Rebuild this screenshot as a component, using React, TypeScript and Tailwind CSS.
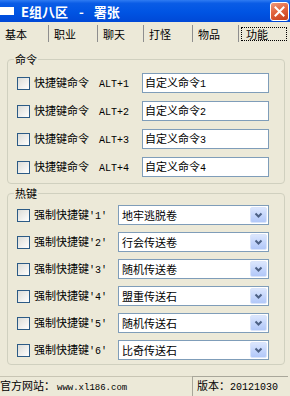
import React from "react";

const CJK = "font-['Noto_Sans_CJK_SC',sans-serif]";
const MONO = "font-['Liberation_Mono',monospace]";

function Checkbox() {
  return (
    <div className="w-[13px] h-[13px] shrink-0 border border-[#2c5b86] bg-gradient-to-br from-[#dcdcd7] to-white" />
  );
}

function Chevron() {
  return (
    <svg width="9" height="7" viewBox="0 0 9 7">
      <path d="M1.5 1.5 L4.5 4.5 L7.5 1.5" fill="none" stroke="#4d6185" strokeWidth="2" />
    </svg>
  );
}

function GroupBox({ label, className, children }: { label: string; className: string; children: React.ReactNode }) {
  return (
    <div className={`relative mx-[7px] w-[278px] border border-[#d0d0bf] rounded-[4px] ${className}`}>
      <span className={`absolute -top-[8px] left-[6px] bg-[#ece9d8] px-[1px] text-[11px] leading-[14px] text-black ${CJK}`}>
        {label}
      </span>
      {children}
    </div>
  );
}

export default function App() {
  const tabs = [
    { t: "基本", w: "w-[48px]" },
    { t: "职业", w: "w-[49px]" },
    { t: "聊天", w: "w-[46px]" },
    { t: "打怪", w: "w-[49px]" },
    { t: "物品", w: "w-[46px]" },
  ];
  const cmds = ["1", "2", "3", "4"];
  const hot = [
    { n: "1", v: "地牢逃脱卷" },
    { n: "2", v: "行会传送卷" },
    { n: "3", v: "随机传送卷" },
    { n: "4", v: "盟重传送石" },
    { n: "5", v: "随机传送石" },
    { n: "6", v: "比奇传送石" },
  ];
  return (
    <div className={`w-[290px] h-[396px] overflow-hidden bg-[#ece9d8] flex flex-col text-black ${CJK}`}>
      {/* title bar */}
      <div className="h-[22px] shrink-0 flex items-center bg-[linear-gradient(180deg,#2f7bf2_0%,#0a5ce6_15%,#0054e3_55%,#0048d6_100%)]">
        <div className="w-[14px] h-[8px] bg-white shrink-0" />
        <div className={`ml-[7px] flex items-baseline text-[13px] font-bold text-white leading-none ${CJK}`}>
          <span>E组八区</span>
          <span className="ml-[11px]">-</span>
          <span className="ml-[10px]">署张</span>
        </div>
        <div className="ml-auto mr-[1px] w-[19px] h-[19px] rounded-[3px] border border-white bg-[linear-gradient(160deg,#f09a7c_0%,#e2643f_45%,#c63e1a_100%)] flex items-center justify-center">
          <svg width="11" height="11" viewBox="0 0 11 11">
            <path d="M1.5 1.5 L9.5 9.5 M9.5 1.5 L1.5 9.5" stroke="white" strokeWidth="2" strokeLinecap="square" />
          </svg>
        </div>
      </div>

      {/* tabs */}
      <div className="h-[20px] shrink-0 flex items-stretch pt-[3px]">
        {tabs.map((tb, i) => (
          <div
            key={tb.t}
            className={`${tb.w} flex items-center pl-[5px] pt-[2px] text-[11px] leading-none ${i > 0 ? "border-l border-[#8e8e8e]" : ""}`}
          >
            {tb.t}
          </div>
        ))}
        <div className="flex-1 border-l border-[#8e8e8e] flex items-center pl-[2px] pr-[2px]">
          <div className="w-[46px] h-[14px] border border-dotted border-black flex items-center pl-[4px] pt-[1px] text-[11px] leading-none">
            功能
          </div>
        </div>
      </div>

      {/* command group */}
      <GroupBox label="命令" className="mt-[17px] pt-[13px] pb-[6px] flex flex-col gap-[8px]">
        {cmds.map((n) => (
          <div key={n} className="h-[20px] flex items-center pl-[9px]">
            <Checkbox />
            <div className="ml-[4px] w-[108px] flex items-baseline text-[11px] leading-[14px]">
              <span>快捷键命令</span>
              <span className={`ml-[10px] text-[10px] ${MONO}`}>ALT+{n}</span>
            </div>
            <div className="w-[127px] h-[20px] border border-[#7f9db9] bg-white flex items-center pl-[2px]">
              <div className="flex items-baseline text-[11px] leading-[14px]">
                <span>自定义命令</span>
                <span className={`text-[10px] ${MONO}`}>{n}</span>
              </div>
            </div>
          </div>
        ))}
      </GroupBox>

      {/* hotkey group */}
      <GroupBox label="热键" className="mt-[9px] pt-[11px] pb-[4px] flex flex-col gap-[7px]">
        {hot.map((h) => (
          <div key={h.n} className="h-[20px] flex items-center pl-[9px]">
            <Checkbox />
            <div className="ml-[4px] w-[84px] flex items-baseline text-[11px] leading-[14px]">
              <span>强制快捷键</span>
              <span className={`text-[10px] ${MONO}`}>'{h.n}'</span>
            </div>
            <div className="w-[151px] h-[20px] border border-[#7f9db9] bg-white flex items-center pl-[3px] pr-[1px] text-[11px] leading-none">
              <span>{h.v}</span>
              <div className="ml-auto w-[17px] h-[16px] rounded-[2px] border border-[#d9e4fb] bg-[linear-gradient(180deg,#dbe6fd_0%,#c1d3fb_60%,#b2c8f8_100%)] flex items-center justify-center">
                <Chevron />
              </div>
            </div>
          </div>
        ))}
      </GroupBox>

      {/* status bar */}
      <div className="mt-auto h-[20px] shrink-0 flex items-stretch">
        <div className="w-[192px] border-t border-[#c8c5b4] flex items-center">
          <div className="flex items-baseline text-[11px] leading-[14px]">
            <span>官方网站：</span>
            <span className={`ml-[2px] text-[9px] ${MONO}`}>www.xl186.com</span>
          </div>
        </div>
        <div className="w-[96px] border-t border-l border-[#a9a79a] flex items-center pl-[4px]">
          <div className="flex items-baseline text-[11px] leading-[14px]">
            <span>版本：</span>
            <span className={`text-[10px] ${MONO}`}>20121030</span>
          </div>
        </div>
      </div>
    </div>
  );
}
